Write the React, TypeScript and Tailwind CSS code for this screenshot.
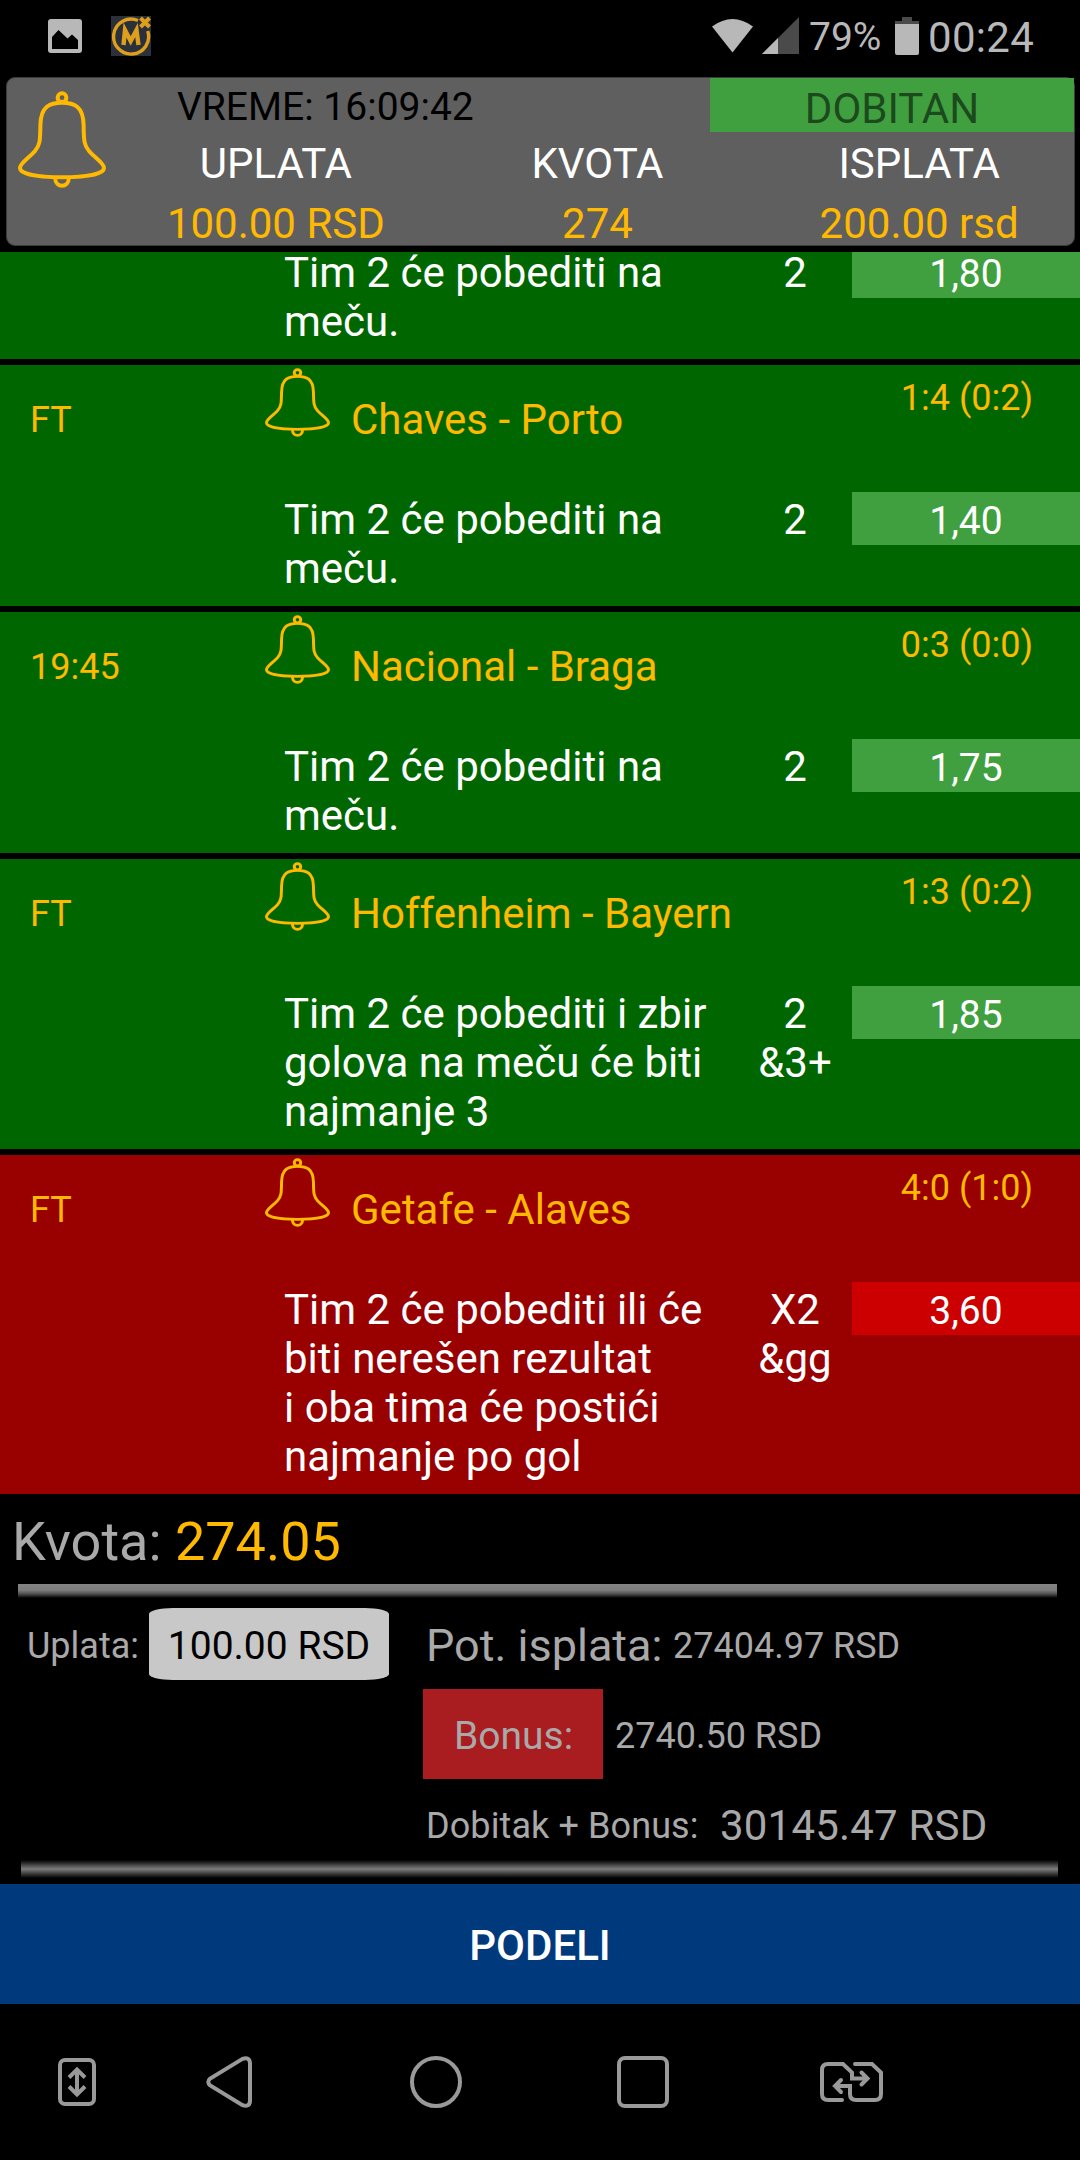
import type { ReactNode } from "react";

interface Match {
  time: string;
  teams: string;
  score: string;
  lines: string[];
  tip: string[];
  odds: string;
  lost?: boolean;
}

const matches: Match[] = [
  {
    time: "FT",
    teams: "Chaves - Porto",
    score: "1:4 (0:2)",
    lines: ["Tim 2 će pobediti na", "meču."],
    tip: ["2"],
    odds: "1,40",
  },
  {
    time: "19:45",
    teams: "Nacional - Braga",
    score: "0:3 (0:0)",
    lines: ["Tim 2 će pobediti na", "meču."],
    tip: ["2"],
    odds: "1,75",
  },
  {
    time: "FT",
    teams: "Hoffenheim - Bayern",
    score: "1:3 (0:2)",
    lines: ["Tim 2 će pobediti i zbir", "golova na meču će biti", "najmanje 3"],
    tip: ["2", "&3+"],
    odds: "1,85",
  },
  {
    time: "FT",
    teams: "Getafe - Alaves",
    score: "4:0 (1:0)",
    lines: [
      "Tim 2 će pobediti ili će",
      "biti nerešen rezultat",
      "i oba tima će postići",
      "najmanje po gol",
    ],
    tip: ["X2", "&gg"],
    odds: "3,60",
    lost: true,
  },
];

function Bell({ className }: { className: string }) {
  return (
    <svg
      viewBox="0 0 88 97"
      fill="none"
      stroke="#ffb900"
      strokeWidth="4"
      preserveAspectRatio="none"
      className={className}
    >
      <circle cx="44" cy="6.7" r="4.4" />
      <path d="M44 11.7C32 11.7 22.8 15 22.4 34C22.2 50 22 54 17 60C11 67 2 72 2 77C2 83 20 86.2 44 86.2C68 86.2 86 83 86 77C86 72 77 67 71 60C66 54 65.8 50 65.6 34C65.2 15 56 11.7 44 11.7Z" />
      <path d="M37.2 87C37.2 97.3 50.8 97.3 50.8 87" />
    </svg>
  );
}

function StatusBar() {
  return (
    <div className="flex h-[77px] items-start pl-12 text-[#b8b8b8]">
      <svg viewBox="0 0 34 34" className="mt-[19px] h-[34px] w-[34px]">
        <rect width="34" height="34" rx="3" fill="#b8b8b8" />
        <path d="M4 30V18L10.500 11L19.500 19.500L24 15.500L30 21V30Z" fill="#000" />
      </svg>
      <svg viewBox="0 0 40 40" className="mt-4 ml-[29px] h-10 w-10" fill="none" stroke="#dd9f1c">
        <rect width="40" height="40" fill="#2b303b" stroke="none" />
        <path d="M27 4.500A17.500 17.500 0 1 0 36.700 15" strokeWidth="3.400" />
        <path d="M12.500 29L14 14L19.700 25L25.500 14L27.500 29" strokeWidth="4.400" />
        <path d="M29.500 2L38.500 11M38.500 2L29.500 11" strokeWidth="4" />
      </svg>
      <svg viewBox="0 0 41 34" className="mt-[19px] ml-[561px] h-[34px] w-[41px]">
        <path d="M0 7.500Q20.500 -7.500 41 7.500L20.500 33.500Z" fill="#b8b8b8" />
      </svg>
      <svg viewBox="0 0 37 37" className="mt-[17px] ml-[9px] h-[37px] w-[37px]">
        <path d="M37 0V37H0Z" fill="#4a4a4a" />
        <path d="M16 21V37H0Z" fill="#b8b8b8" />
      </svg>
      <span className="mt-[14px] ml-[10px] w-[73px] text-[39px] leading-[46px]">79%</span>
      <svg viewBox="0 0 24 38" className="mt-[17px] ml-[13px] h-[38px] w-6">
        <path d="M7 0H17V4H24V8H0V4H7Z" fill="#4a4a4a" />
        <path d="M0 7H24V36Q24 38 22 38H2Q0 38 0 36Z" fill="#b8b8b8" />
      </svg>
      <span className="mt-[13px] ml-[9px] text-[42px] leading-[49px] tracking-[0.3px]">00:24</span>
    </div>
  );
}

function HeaderColumn({ label, value }: { label: string; value: string }) {
  return (
    <div className="flex w-[322px] flex-col items-center text-[42px] leading-[49px]">
      <span className="text-white">{label}</span>
      <span className="mt-[11px] text-[#ffb900]">{value}</span>
    </div>
  );
}

function TicketHeader() {
  return (
    <header className="relative mr-[5px] ml-[6px] h-[169px] rounded-[9px] border border-[#3c3c3c] bg-[#5f5f5f]">
      <Bell className="absolute top-[13px] left-[11px] h-[97px] w-[88px]" />
      <div className="flex justify-between">
        <span className="mt-[6px] ml-[170px] text-[39px] leading-[46px] text-black">
          VREME: 16:09:42
        </span>
        <span className="h-[54px] w-[364px] bg-[#40a040] pt-[6px] text-center text-[42px] leading-[49px] text-[#1d4a1d]">
          DOBITAN
        </span>
      </div>
      <div className="-mr-[6px] ml-[108px] flex pt-[7px]">
        <HeaderColumn label="UPLATA" value="100.00 RSD" />
        <HeaderColumn label="KVOTA" value="274" />
        <HeaderColumn label="ISPLATA" value="200.00 rsd" />
      </div>
    </header>
  );
}

interface TipProps extends Pick<Match, "lines" | "tip" | "odds" | "lost"> {
  scrolled?: boolean;
}

function Tip({ lines, tip, odds, lost, scrolled }: TipProps) {
  return (
    <div className="flex items-start pb-[13px] pl-[284px] text-[42px] leading-[49px] whitespace-nowrap text-white">
      <div className="w-[454px] pt-[3px]">
        {lines.map((line) => (
          <p key={line}>{line}</p>
        ))}
      </div>
      <div className="w-[114px] pt-[3px] text-center">
        {tip.map((line) => (
          <p key={line}>{line}</p>
        ))}
      </div>
      <div
        className={`flex-1 text-center text-[39px] ${
          scrolled ? "mt-[7px] h-[46px] leading-[44px]" : "h-[53px] pt-[6px] leading-[46px]"
        } ${lost ? "bg-[#cc0000]" : "bg-[#40a040]"}`}
      >
        {odds}
      </div>
    </div>
  );
}

function MatchRow({ match }: { match: Match }) {
  return (
    <section className={match.lost ? "bg-[#990000]" : "bg-[#006600]"}>
      <div className="flex h-[127px] items-start text-[36px] leading-[42px] text-[#ffb900]">
        <span className="mt-[34px] w-[235px] pl-[30px]">{match.time}</span>
        <Bell className="mt-[3px] ml-[30px] h-[69px] w-[65px]" />
        <span className="mt-[30px] ml-[21px] flex-1 text-[42px] leading-[49px]">{match.teams}</span>
        <span className="mt-[12px] pr-[47px]">{match.score}</span>
      </div>
      <Tip lines={match.lines} tip={match.tip} odds={match.odds} lost={match.lost} />
    </section>
  );
}

function Summary() {
  return (
    <div className="h-[390px] text-[36px] leading-[42px] text-[#a9a9a9]">
      <p className="h-[90px] pt-[16px] pl-3 text-[54px] leading-[63px]">
        Kvota: <span className="text-[#ffb900]">274.05</span>
      </p>
      <div className="mr-[23px] ml-[18px] h-[14px] bg-[linear-gradient(to_bottom,#848484_0%,#7c7c7c_45%,#4c4c4c_72%,#000_100%)]" />
      <div className="flex h-[262px] items-start">
        <div className="flex w-[423px] items-start pt-[10px] pl-[27px]">
          <span className="w-[122px] pt-[17px]">Uplata:</span>
          <span className="h-[72px] w-[240px] rounded-[24px/6px] bg-[#c8c8c8] pt-[15px] text-center text-[39px] leading-[46px] text-black">
            100.00 RSD
          </span>
        </div>
        <div>
          <div className="flex h-[91px] items-start pl-[3px]">
            <span className="w-[247px] pt-[21px] text-[45px] leading-[53px]">Pot. isplata:</span>
            <span className="pt-[27px]">27404.97 RSD</span>
          </div>
          <div className="flex h-[90px] items-start">
            <span className="h-[90px] w-[180px] bg-[#a91c1f] pt-[24px] pl-px text-center text-[39px] leading-[46px]">
              Bonus:
            </span>
            <span className="pt-[26px] pl-3">2740.50 RSD</span>
          </div>
          <div className="flex items-start pl-[3px]">
            <span className="w-[294px] pt-[26px] tracking-[0.1px]">Dobitak + Bonus:</span>
            <span className="pt-[22px] text-[42px] leading-[49px] tracking-[0.2px]">
              30145.47 RSD
            </span>
          </div>
        </div>
      </div>
      <div className="mr-[22px] ml-[21px] h-[18px] bg-[linear-gradient(to_bottom,#000,#7c7c7c_50%,#000)]" />
    </div>
  );
}

function NavIcon({ className, children }: { className: string; children: ReactNode }) {
  return (
    <svg fill="none" stroke="#999" strokeWidth="4" className={className}>
      {children}
    </svg>
  );
}

function NavBar() {
  return (
    <nav className="flex h-[156px] items-center">
      <NavIcon className="ml-[58px] h-12 w-[38px]">
        <rect x="2" y="2" width="34" height="44" rx="5" />
        <path d="M19 12V36M11 19.500L19 11.500L27 19.500M11 28.500L19 36.500L27 28.500" />
      </NavIcon>
      <NavIcon className="ml-[110px] h-[52px] w-[46px]">
        <path d="M36.500 2.900L4.200 22.600Q0.300 26 4.200 29.400L36.500 49.100Q43.500 51.500 44 45V7Q43.500 0.500 36.500 2.900Z" />
      </NavIcon>
      <NavIcon className="ml-[158px] h-[52px] w-[52px]">
        <circle cx="26" cy="26" r="24" />
      </NavIcon>
      <NavIcon className="ml-[155px] h-[52px] w-[52px]">
        <rect x="2" y="2" width="48" height="48" rx="6" />
      </NavIcon>
      <NavIcon className="ml-[151px] h-10 w-[63px]">
        <g strokeLinecap="round">
          <path d="M22 38H8Q2 38 2 32V8Q2 2 8 2H23L32 10.500V16.500H47M41.500 10.500L47.500 16.500L41.500 22.500" />
          <path d="M35 2H52L61 10.500V32Q61 38 55 38H36Q30 38 30 32V24H15M21 18L15 24L21 30" />
        </g>
      </NavIcon>
    </nav>
  );
}

export default function App() {
  return (
    <div className="h-[2160px] w-[1080px] overflow-hidden bg-black font-['Roboto',sans-serif]">
      <StatusBar />
      <TicketHeader />
      <main className="mt-[6px] flex flex-col gap-[6px]">
        {/* first ticket item, scrolled partly under the header */}
        <section className="flow-root h-[107px] bg-[#006600]">
          <div className="-mt-[7px]">
            <Tip lines={["Tim 2 će pobediti na", "meču."]} tip={["2"]} odds="1,80" scrolled />
          </div>
        </section>
        {matches.map((match) => (
          <MatchRow key={match.teams} match={match} />
        ))}
      </main>
      <Summary />
      <button className="block h-[120px] w-full bg-[#003a7c] pt-[3px] text-[42px] leading-[49px] font-medium text-white">
        PODELI
      </button>
      <NavBar />
    </div>
  );
}
